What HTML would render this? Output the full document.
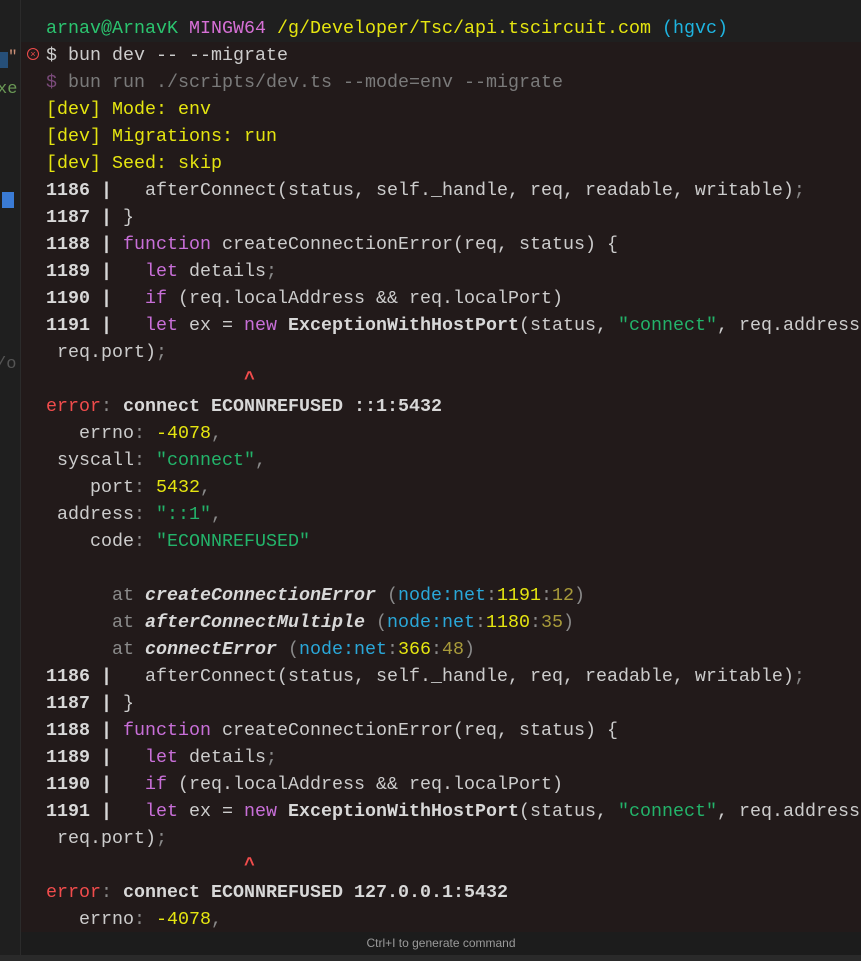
<!DOCTYPE html>
<html><head><meta charset="utf-8"><style>
html,body{margin:0;padding:0;width:861px;height:961px;overflow:hidden;background:#1f1f1f;}
#left{position:absolute;left:0;top:0;width:20px;height:961px;background:#1f1f1f;border-right:1px solid #2b2b2b;overflow:hidden;}
#term{position:absolute;left:21px;top:42px;width:840px;height:890px;background:#221a1a;}
#top{position:absolute;left:21px;top:0;width:840px;height:42px;background:#1f1f1f;}
.l{position:absolute;left:46px;height:27px;line-height:27px;white-space:pre;font-family:"Liberation Mono","DejaVu Sans Mono",monospace;font-size:18.33px;color:#cccccc;}
.b{font-weight:bold;color:#d8d8d8}
.g{color:#2bc46f}.p{color:#d670d6}.y{color:#e5e510}.c{color:#1fb4e0}
.k{color:#c86fd8}.s{color:#23b36a}.n{color:#2aa7d8}.o{color:#a89a3a}.d{color:#8a8a8a}.r{color:#f14c4c}.dim{color:#7a7a7a}
.i{font-style:italic;font-weight:bold;color:#d8d8d8}
#bar{position:absolute;left:21px;top:932px;width:840px;height:23px;background:#1c1c1c;font-family:"Liberation Sans",sans-serif;font-size:12px;color:#9a9a9a;text-align:center;line-height:23px;}
#bot{position:absolute;left:0;top:955px;width:861px;height:6px;background:#2a2a2a;}
</style></head><body>
<div id="left">
<div style="position:absolute;left:0;top:52px;width:8px;height:16px;background:#264f78"></div>
<div style="position:absolute;left:8px;top:48px;font:16px 'Liberation Mono';color:#ce9178">"</div>
<div style="position:absolute;left:-3px;top:80px;font:17px 'Liberation Mono';color:#6a9955">xe</div>
<div style="position:absolute;left:2px;top:192px;width:12px;height:16px;background:#3a7bd5"></div>
<div style="position:absolute;left:-4px;top:355px;font:17px 'Liberation Mono';color:#555">/o</div>
</div>
<div id="top"></div>
<div id="term"></div>
<div style="position:absolute;left:27px;top:48px;width:10px;height:10px;border:1px solid #f14c4c;border-radius:50%;color:#f14c4c;font:9px/10px 'Liberation Sans';text-align:center">×</div>

<div class="l" style="top:15px"><span class="g">arnav@ArnavK</span> <span class="p">MINGW64</span> <span class="y">/g/Developer/Tsc/api.tscircuit.com</span> <span class="c">(hgvc)</span></div>
<div class="l" style="top:42px">$ bun dev -- --migrate</div>
<div class="l" style="top:69px"><span style="color:#7a4a7a">$</span><span class="dim"> bun run ./scripts/dev.ts --mode=env --migrate</span></div>
<div class="l y" style="top:96px">[dev] Mode: env</div>
<div class="l y" style="top:123px">[dev] Migrations: run</div>
<div class="l y" style="top:150px">[dev] Seed: skip</div>
<div class="l" style="top:177px"><span class="b">1186 |</span>   afterConnect(status, self._handle, req, readable, writable)<span class="d">;</span></div>
<div class="l" style="top:204px"><span class="b">1187 |</span> }</div>
<div class="l" style="top:231px"><span class="b">1188 |</span> <span class="k">function</span> createConnectionError(req, status) {</div>
<div class="l" style="top:258px"><span class="b">1189 |</span>   <span class="k">let</span> details<span class="d">;</span></div>
<div class="l" style="top:285px"><span class="b">1190 |</span>   <span class="k">if</span> (req.localAddress &amp;&amp; req.localPort)</div>
<div class="l" style="top:312px"><span class="b">1191 |</span>   <span class="k">let</span> ex = <span class="k">new</span> <span class="b">ExceptionWithHostPort</span>(status, <span class="s">"connect"</span>, req.address,</div>
<div class="l" style="top:339px"> req.port)<span class="d">;</span></div>
<div class="l r b" style="top:366px;color:#f14c4c">                  ^</div>
<div class="l" style="top:393px"><span class="r">error</span><span class="d">:</span> <span class="b">connect ECONNREFUSED ::1:5432</span></div>
<div class="l" style="top:420px">   errno<span class="d">:</span> <span class="y">-4078</span><span class="d">,</span></div>
<div class="l" style="top:447px"> syscall<span class="d">:</span> <span class="s">"connect"</span><span class="d">,</span></div>
<div class="l" style="top:474px">    port<span class="d">:</span> <span class="y">5432</span><span class="d">,</span></div>
<div class="l" style="top:501px"> address<span class="d">:</span> <span class="s">"::1"</span><span class="d">,</span></div>
<div class="l" style="top:528px">    code<span class="d">:</span> <span class="s">"ECONNREFUSED"</span></div>
<div class="l" style="top:582px">      <span class="d">at</span> <span class="i">createConnectionError</span> <span class="d">(</span><span class="n">node:net</span><span class="d">:</span><span class="y">1191</span><span class="d">:</span><span class="o">12</span><span class="d">)</span></div>
<div class="l" style="top:609px">      <span class="d">at</span> <span class="i">afterConnectMultiple</span> <span class="d">(</span><span class="n">node:net</span><span class="d">:</span><span class="y">1180</span><span class="d">:</span><span class="o">35</span><span class="d">)</span></div>
<div class="l" style="top:636px">      <span class="d">at</span> <span class="i">connectError</span> <span class="d">(</span><span class="n">node:net</span><span class="d">:</span><span class="y">366</span><span class="d">:</span><span class="o">48</span><span class="d">)</span></div>
<div class="l" style="top:663px"><span class="b">1186 |</span>   afterConnect(status, self._handle, req, readable, writable)<span class="d">;</span></div>
<div class="l" style="top:690px"><span class="b">1187 |</span> }</div>
<div class="l" style="top:717px"><span class="b">1188 |</span> <span class="k">function</span> createConnectionError(req, status) {</div>
<div class="l" style="top:744px"><span class="b">1189 |</span>   <span class="k">let</span> details<span class="d">;</span></div>
<div class="l" style="top:771px"><span class="b">1190 |</span>   <span class="k">if</span> (req.localAddress &amp;&amp; req.localPort)</div>
<div class="l" style="top:798px"><span class="b">1191 |</span>   <span class="k">let</span> ex = <span class="k">new</span> <span class="b">ExceptionWithHostPort</span>(status, <span class="s">"connect"</span>, req.address,</div>
<div class="l" style="top:825px"> req.port)<span class="d">;</span></div>
<div class="l r b" style="top:852px;color:#f14c4c">                  ^</div>
<div class="l" style="top:879px"><span class="r">error</span><span class="d">:</span> <span class="b">connect ECONNREFUSED 127.0.0.1:5432</span></div>
<div class="l" style="top:906px;height:26px;overflow:hidden">   errno<span class="d">:</span> <span class="y">-4078</span><span class="d">,</span></div>
<div id="bar">Ctrl+I to generate command</div>
<div id="bot"></div>
</body></html>
